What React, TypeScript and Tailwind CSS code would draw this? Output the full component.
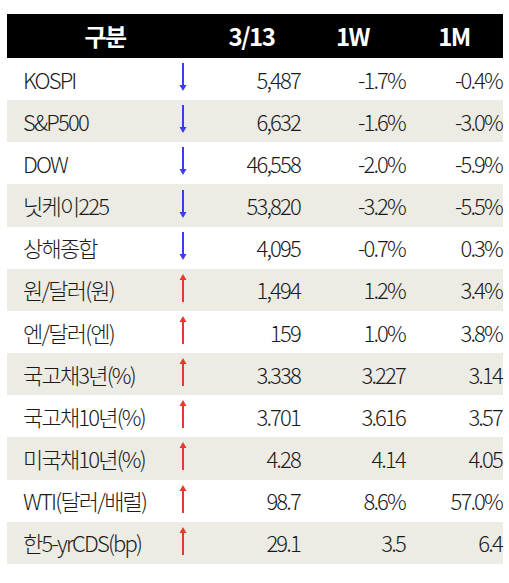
import React from "react";

type Row = {
  name: string;
  dir: "up" | "down";
  d: string;
  w: string;
  m: string;
};

const rows: Row[] = [
  { name: "KOSPI", dir: "down", d: "5,487", w: "-1.7%", m: "-0.4%" },
  { name: "S&P500", dir: "down", d: "6,632", w: "-1.6%", m: "-3.0%" },
  { name: "DOW", dir: "down", d: "46,558", w: "-2.0%", m: "-5.9%" },
  { name: "닛케이225", dir: "down", d: "53,820", w: "-3.2%", m: "-5.5%" },
  { name: "상해종합", dir: "down", d: "4,095", w: "-0.7%", m: "0.3%" },
  { name: "원/달러(원)", dir: "up", d: "1,494", w: "1.2%", m: "3.4%" },
  { name: "엔/달러(엔)", dir: "up", d: "159", w: "1.0%", m: "3.8%" },
  { name: "국고채3년(%)", dir: "up", d: "3.338", w: "3.227", m: "3.14" },
  { name: "국고채10년(%)", dir: "up", d: "3.701", w: "3.616", m: "3.57" },
  { name: "미국채10년(%)", dir: "up", d: "4.28", w: "4.14", m: "4.05" },
  { name: "WTI(달러/배럴)", dir: "up", d: "98.7", w: "8.6%", m: "57.0%" },
  { name: "한5-yrCDS(bp)", dir: "up", d: "29.1", w: "3.5", m: "6.4" },
];

const Arrow = ({ dir }: { dir: "up" | "down" }) => {
  const color = dir === "up" ? "#e8382c" : "#3b3bf5";
  return (
    <svg width="12" height="30" viewBox="0 0 12 30" className="-mt-[4px]">
      {dir === "down" ? (
        <>
          <line x1="6" y1="1" x2="6" y2="26" stroke={color} strokeWidth="2" />
          <path d="M2.5 23 L6 29 L9.5 23 Z" fill={color} />
        </>
      ) : (
        <>
          <line x1="6" y1="4" x2="6" y2="29" stroke={color} strokeWidth="2" />
          <path d="M2.5 7 L6 1 L9.5 7 Z" fill={color} />
        </>
      )}
    </svg>
  );
};

export default function App() {
  return (
    <div
      className="w-[509px] h-[583px] bg-white pt-[14px] pl-[7px]"
      style={{ fontFamily: '"Noto Sans CJK KR", "Noto Sans", sans-serif' }}
    >
      <div className="w-[496px]">
        <div className="flex h-[44px] items-center bg-black text-white font-bold text-[24px] tracking-[-1.5px]">
          <div className="w-[196px] text-center">구분</div>
          <div className="w-[97px] text-center">3/13</div>
          <div className="w-[105px] text-center">1W</div>
          <div className="w-[98px] text-center">1M</div>
        </div>
        {rows.map((r, i) => (
          <div
            key={r.name}
            className={`flex h-[42.17px] items-center text-[22px] font-light tracking-[-1.8px] text-[#1a1a1a] ${
              i % 2 === 1 ? "bg-[#ecebe4]" : "bg-white"
            }`}
          >
            <div className="w-[170px] pl-[16px] whitespace-nowrap">{r.name}</div>
            <div className="w-[12px] flex items-center">
              <Arrow dir={r.dir} />
            </div>
            <div className="w-[111px] text-right">{r.d}</div>
            <div className="w-[105px] text-right">{r.w}</div>
            <div className="w-[98px] text-right pr-[1px]">{r.m}</div>
          </div>
        ))}
      </div>
    </div>
  );
}
